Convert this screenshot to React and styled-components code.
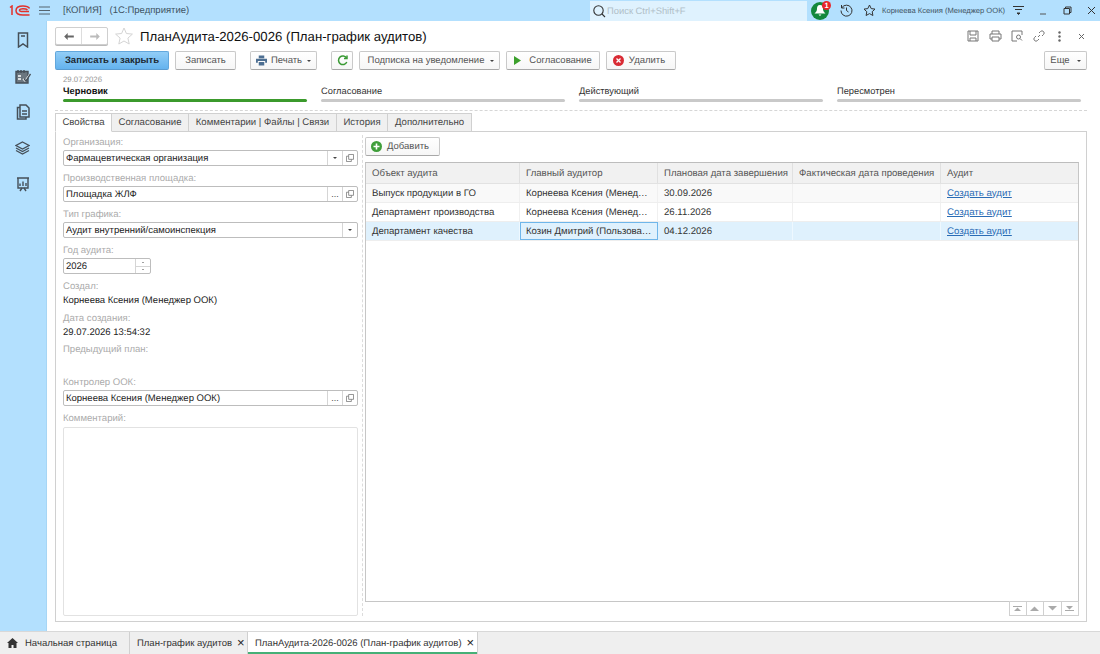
import React from "react";
import styled, { createGlobalStyle } from "styled-components";

const Global = createGlobalStyle`
html, body { margin: 0; padding: 0; height: 654px; overflow: hidden; background: #fff; }
#root { height: 654px; }
* { box-sizing: border-box; }
body { font-family: "Liberation Sans", Arial, sans-serif; font-size: 9.5px; color: #222; text-rendering: geometricPrecision; }
`;

const Page = styled.div`
  display: flex; flex-direction: column; width: 1100px; height: 654px; overflow: hidden;
`;
const TopBar = styled.div`
  display: flex; align-items: center; height: 21px; background: #b3e0fe; flex: none; position: relative;
`;
const Logo = styled.div`
  width: 30px; padding-left: 9px; flex: none; display: flex; align-items: center;
`;
const Burger = styled.div`
  width: 33px; padding-left: 9px; flex: none; display: flex; align-items: center;
`;
const AppName = styled.div`
  color: #3f5362; font-size: 9.5px; white-space: pre; width: 527px; flex: none; padding-left: 0;
`;
const Search = styled.div`
  width: 217px; height: 20px; background: #dff2fe; display: flex; align-items: center; gap: 1px;
  color: #b0bec7; font-size: 9.4px; padding-left: 2px; flex: none;
`;
const Bell = styled.div`
  position: relative; width: 18px; height: 18px; border-radius: 50%; background: #12883c; margin-left: 4px; flex: none;
  display: flex; align-items: center; justify-content: center;
`;
const BellBadge = styled.span`
  position: absolute; right: -2px; top: -1px; width: 9px; height: 9px; border-radius: 50%; background: #e8252b;
  color: #fff; font-size: 7.5px; font-weight: bold; line-height: 9px; text-align: center;
`;
const TopIcon = styled.div`
  width: ${(p) => p.$w || 23}px; flex: none; display: flex; justify-content: center; align-items: center;
`;
const UserName = styled.div`
  width: 126px; flex: none; color: #3f5362; font-size: 7.6px; white-space: nowrap; padding-left: 2px;
`;
const Middle = styled.div`
  flex: 1; display: flex; min-height: 0;
`;
const Sidebar = styled.div`
  width: 47px; flex: none; background: #b3e0fe; border-right: 1px solid #a7d6f5;
  display: grid; grid-auto-rows: 36px; align-content: start; padding: 1px 1px 0 0;
`;
const SideSlot = styled.div`
  display: flex; align-items: center; justify-content: center;
`;
const Main = styled.div`
  flex: 1; display: flex; flex-direction: column; min-width: 0; padding: 6px 13px 9px 8px;
`;
const TitleRow = styled.div`
  display: flex; align-items: center; height: 18px; flex: none;
`;
const NavGroup = styled.div`
  display: flex; width: 53px; height: 18px; border: 1px solid #cfcfcf; border-radius: 2px; background: #fff; flex: none;
  box-shadow: 0 1px 0 #bbb;
`;
const NavBtn = styled.div`
  flex: 1; display: flex; align-items: center; justify-content: center;
  & + & { border-left: 1px solid #ddd; }
`;
const Title = styled.div`
  font-size: 13.2px; color: #111; margin-left: 7px; white-space: nowrap; flex: 1;
`;
const TitleIcons = styled.div`
  display: flex; align-items: center; gap: 0; margin-right: -7px;
`;
const Toolbar = styled.div`
  display: flex; align-items: center; height: 19px; margin-top: 6px; flex: none;
`;
const Button = styled.div`
  height: 19px; width: ${(p) => p.$w}px; margin-left: ${(p) => p.$ml ?? 6}px; flex: none;
  display: flex; align-items: center; justify-content: center; gap: ${(p) => p.$gap ?? 5}px;
  padding: 0 ${(p) => p.$pr ?? 0}px 0 ${(p) => p.$pl ?? 0}px;
  border: 1px solid ${(p) => (p.$primary ? "#62a7dc" : "#c9c9c9")};
  border-bottom-color: ${(p) => (p.$primary ? "#5a9bd0" : "#a8a8a8")};
  border-radius: 2px;
  background: ${(p) => (p.$primary ? "linear-gradient(#92cdf7,#64b3ee)" : "linear-gradient(#fff,#f6f6f6)")};
  color: ${(p) => (p.$primary ? "#1c2a35" : "#555")};
  font-weight: ${(p) => (p.$primary ? "bold" : "normal")};
  font-size: 9.5px; white-space: nowrap;
`;
const Caret = styled.span`
  width: 0; height: 0; border-left: 2px solid transparent; border-right: 2px solid transparent;
  border-top: 2px solid #444; margin-left: ${(p) => p.$ml ?? 1}px;
`;
const Spring = styled.div`flex: 1;`;
const Steps = styled.div`
  display: flex; gap: 14px; padding: 0 0 0 8px; align-items: flex-end; height: 32px; flex: none;
`;
const Step = styled.div`
  width: 244px; flex: none; display: flex; flex-direction: column;
`;
const StepDate = styled.div`
  font-size: 7.8px; color: #999; line-height: 9px; height: 10px;
`;
const StepName = styled.div`
  font-size: 9.3px; line-height: 12px; color: ${(p) => (p.$on ? "#111" : "#333")}; font-weight: ${(p) => (p.$on ? "bold" : "normal")};
`;
const StepBar = styled.div`
  height: 3px; border-radius: 2px; margin-top: 2px; background: ${(p) => (p.$on ? "#3b9a2c" : "#c9c9c9")};
`;
const Dashed = styled.div`
  border-top: 1px dashed #d6d6d6; margin-top: 8px; flex: none;
`;
const Tabs = styled.div`
  display: flex; height: 19px; margin-top: 2px; flex: none; position: relative; z-index: 1; margin-bottom: -1px;
`;
const Tab = styled.div`
  height: 19px; width: ${(p) => p.$w}px; flex: none; display: flex; align-items: center; justify-content: center;
  border: 1px solid #d0d0d0; border-left-width: ${(p) => (p.$first ? 1 : 0)}px;
  border-bottom-color: ${(p) => (p.$on ? "#fff" : "#d0d0d0")};
  background: ${(p) => (p.$on ? "#fff" : "#f0f0f0")}; color: #444; font-size: 9.6px; white-space: nowrap;
`;
const Panel = styled.div`
  flex: 1; min-height: 0; display: flex; border: 1px solid #d0d0d0; padding: 0 7px 5px 7px;
`;
const FormCol = styled.div`
  width: 295px; flex: none; display: flex; flex-direction: column; padding-top: 4px; margin-right: 4px;
`;
const Label = styled.div`
  height: 14px; line-height: 14px; color: #ababab; font-size: 9.55px; flex: none;
`;
const Value = styled.div`
  height: ${(p) => p.$h || 13}px; line-height: 14px; font-size: 9.5px; color: #222; margin-bottom: ${(p) => p.$mb ?? 5}px; flex: none;
`;
const Field = styled.div`
  height: 16px; width: ${(p) => p.$w ? p.$w + "px" : "100%"}; flex: none; display: flex; margin-bottom: 6px;
  border: 1px solid #bdbdbd; border-radius: 2px; background: #fff;
`;
const FieldText = styled.div`
  flex: 1; padding-left: 2px; line-height: 15px; font-size: 9.5px; color: #222; white-space: nowrap;
`;
const FieldBtn = styled.div`
  width: 15px; flex: none; border-left: 1px solid #d5d5d5; display: flex; align-items: center; justify-content: center;
  color: #444; font-size: 9px;
`;
const Spin = styled.div`
  width: 15px; flex: none; border-left: 1px solid #d5d5d5; display: flex; flex-direction: column;
`;
const SpinPart = styled.div`
  flex: 1; display: flex; align-items: center; justify-content: center;
  & + & { border-top: 1px solid #d5d5d5; }
`;
const Comment = styled.div`
  flex: 1; border: 1px solid #e2e2e2; border-radius: 2px; margin-top: 1px; background: #fff;
`;
const TableCol = styled.div`
  flex: 1; min-width: 0; display: flex; flex-direction: column; border-left: 1px dashed #dcdcdc; padding: 5px 0 0 2px; margin-top: 3px; margin-bottom: 0;
`;
const AddRow = styled.div`
  display: flex; height: 19px; margin-top: -3px; flex: none;
`;
const Table = styled.div`
  flex: 1; min-height: 0; border: 1px solid #c6c6c6; border-top-color: #bdbdbd; margin-top: 6px; background: #fff;
`;
const Row = styled.div`
  display: grid; grid-template-columns: 154px 138px 135px 148px 1fr; height: ${(p) => (p.$head ? 21 : 19)}px;
  background: ${(p) => (p.$head ? "#f1f1f1" : p.$sel ? "#dff1fd" : p.$odd ? "#f9f9f9" : "#fff")};
  border-bottom: 1px solid ${(p) => (p.$head ? "#e2e2e2" : "#eee")};
`;
const Cell = styled.div`
  display: flex; align-items: center; padding-left: 6px; font-size: 9.6px; color: ${(p) => (p.$head ? "#555" : "#333")};
  border-right: 1px solid ${(p) => (p.$sel ? "#eef8ff" : p.$head ? "#e0e0e0" : "#f0f0f0")}; white-space: nowrap; overflow: hidden;
  &:last-child { border-right: 0; }
  ${(p) => p.$cur && "border: 1px solid #6fb6ea; padding-left: 5px;"}
`;
const LinkText = styled.a`
  color: #2a6cb5; text-decoration: underline; font-size: 9.7px;
`;
const Pager = styled.div`
  display: flex; justify-content: flex-end; flex: none; height: 15px; margin-top: -1px;
`;
const PagerBtn = styled.div`
  width: 17.5px; height: 15px; border: 1px solid #d0d0d0; border-left-width: ${(p) => (p.$first ? 1 : 0)}px;
  display: flex; align-items: center; justify-content: center; background: #fff;
`;
const BottomBar = styled.div`
  height: 23px; flex: none; background: #efefef; border-top: 1px solid #d8d8d8; display: flex;
`;
const BottomTab = styled.div`
  width: ${(p) => p.$w}px; flex: none; display: flex; align-items: center; gap: 5px; padding-left: ${(p) => p.$pl ?? 7}px;
  border-right: 1px solid #d0d0d0; font-size: 9.5px; color: #333; white-space: nowrap;
  background: ${(p) => (p.$on ? "#fff" : "transparent")};
  box-shadow: ${(p) => (p.$on ? "inset 0 -2px 0 #46b077" : "none")};
`;
const TabClose = styled.span`
  font-size: 13px; color: #222; line-height: 10px;
`;

const dark = "#454f58";

const Icon = ({ w = 14, h = 14, vb = "0 0 14 14", c = dark, sw = 1.2, children }) => (
  <svg width={w} height={h} viewBox={vb} fill="none" stroke={c} strokeWidth={sw}>{children}</svg>
);

const SideBookmark = () => (
  <Icon w={14} h={16} vb="0 0 14 16" sw={1.5}>
    <path d="M2.5 1h9v14l-4.5-3-4.5 3z" />
    <path d="M5 4h4" />
  </Icon>
);
const SideCalendar = () => (
  <Icon w={16} h={15} vb="0 0 16 15" sw={1.4}>
    <path d="M1 2.5h12v11.5H1z" fill="#6b767f" />
    <path d="M3 1v3M6 1v3M9 1v3" />
    <path d="M3 7h3M3 10h3M8 10l2 2 5-7" stroke="#fff" />
    <path d="M9 10l2 2 4.5-7" />
  </Icon>
);
const SideDocs = () => (
  <Icon w={14} h={16} vb="0 0 14 16" sw={1.5}>
    <path d="M4 1h6l3 3v9H4z" />
    <path d="M4 3.5H1.5V15H10v-2" />
    <path d="M6 7h5M6 10h5" />
  </Icon>
);
const SideLayers = () => (
  <Icon w={15} h={14} vb="0 0 15 14" sw={1.3}>
    <path d="M7.5 1L14 4.5 7.5 8 1 4.5z" />
    <path d="M1 7l6.5 3.5L14 7" />
    <path d="M1 9.5L7.5 13 14 9.5" />
  </Icon>
);
const SideBoard = () => (
  <Icon w={14} h={15} vb="0 0 14 15" sw={1.4}>
    <path d="M1 1h12M2 1v10h10V1" />
    <path d="M4 9V6.5M7 9V4.5M10 9V6" />
    <path d="M4 14l2-3M10 14l-2-3" />
  </Icon>
);

const CopyGlyph = () => (
  <Icon w={8} h={8} vb="0 0 9 9" c="#777" sw={0.9}>
    <path d="M3 .5h5.5V6H3z" />
    <path d="M3 2.5H.5v6H6V6" />
  </Icon>
);
const Tri = ({ up, c = "#444", s = 2 }) => (
  <span style={{
    width: 0, height: 0, borderLeft: `${s}px solid transparent`, borderRight: `${s}px solid transparent`,
    [up ? "borderBottom" : "borderTop"]: `${s}px solid ${c}`,
  }} />
);

const PagerIcon = ({ d }) => (
  <svg width="9" height="7" viewBox="0 0 9 7" fill="#aaa">
    <path d={d} />
  </svg>
);

const rows = [
  ["Выпуск продукции в ГО", "Корнеева Ксения (Менед…", "30.09.2026"],
  ["Департамент производства", "Корнеева Ксения (Менед…", "26.11.2026"],
  ["Департамент качества", "Козин Дмитрий (Пользова…", "04.12.2026"],
];

export default function App() {
  return (
    <Page>
      <Global />
      <TopBar>
        <Logo>
          <svg width="21" height="11" viewBox="0 0 21 11" fill="none" stroke="#e3312b" strokeWidth="1.5">
            <path d="M1 2.5L3 1v9" />
            <path d="M20.5 3.5C19.5 1.5 17 1 14 1 10 1 7 2.5 7 5.5S10 10 14 10h6.5" />
            <path d="M20 6.5h-6C12 6.5 10.5 6.2 10.5 5.2S12 3.8 14 3.8c2 0 3.5.2 4.5 1" />
          </svg>
        </Logo>
        <Burger>
          <svg width="11" height="9" viewBox="0 0 11 9" stroke="#55646f" strokeWidth="1"><path d="M0 1h11M0 4.5h11M0 8h11" /></svg>
        </Burger>
        <AppName>[КОПИЯ]   (1С:Предприятие)</AppName>
        <Search>
          <svg width="14" height="14" viewBox="0 0 14 14" fill="none" stroke="#333" strokeWidth="1.1">
            <circle cx="6.5" cy="6.5" r="4.7" /><path d="M10 10l3 3" />
          </svg>
          Поиск Ctrl+Shift+F
        </Search>
        <Bell>
          <svg width="12" height="11" viewBox="0 0 12 11" fill="#fff"><path d="M6 0c2.500 0 3 2 3 4s1 3 2.500 4.500H.5C2 7 3 6 3 4s.5-4 3-4zM4.500 9.500h3L6 11z" /></svg>
          <BellBadge>1</BellBadge>
        </Bell>
        <TopIcon $w={24} style={{ marginLeft: 5 }}>
          <svg width="13" height="13" viewBox="0 0 13 13" fill="none" stroke="#333" strokeWidth="1">
            <path d="M2 3.500A5.500 5.500 0 1 1 1 6.500" /><path d="M1.500 1v3h3" /><path d="M6.500 3.500v3l2 1.500" />
          </svg>
        </TopIcon>
        <TopIcon $w={22}>
          <svg width="13" height="13" viewBox="0 0 13 13" fill="none" stroke="#333" strokeWidth="1">
            <path d="M6.500 1l1.700 3.600 3.800.5-2.800 2.600.7 3.800-3.400-1.900-3.400 1.900.7-3.800L1 5.100l3.800-.5z" />
          </svg>
        </TopIcon>
        <UserName>Корнеева Ксения (Менеджер ООК)</UserName>
        <TopIcon $w={24}>
          <svg width="11" height="11" viewBox="0 0 11 11" stroke="#333" strokeWidth="1" fill="#333"><path d="M0 1.500h11M2 4.500h7" /><path d="M4 8h3l-1.500 1.500z" /></svg>
        </TopIcon>
        <TopIcon $w={25}>
          <svg width="8" height="8" viewBox="0 0 8 8" stroke="#555" strokeWidth="1"><path d="M1 7h6" /></svg>
        </TopIcon>
        <TopIcon $w={24}>
          <svg width="9" height="9" viewBox="0 0 9 9" fill="none" stroke="#333" strokeWidth="1"><path d="M1 2.500h5.500V8H1z" /><path d="M2.500 2.500V1H8v5.500H6.500" /></svg>
        </TopIcon>
        <TopIcon $w={24}>
          <svg width="9" height="9" viewBox="0 0 9 9" stroke="#333" strokeWidth="1"><path d="M1 1l7 7M8 1l-7 7" /></svg>
        </TopIcon>
      </TopBar>
      <Middle>
        <Sidebar>
          <SideSlot><SideBookmark /></SideSlot>
          <SideSlot><SideCalendar /></SideSlot>
          <SideSlot><SideDocs /></SideSlot>
          <SideSlot><SideLayers /></SideSlot>
          <SideSlot><SideBoard /></SideSlot>
        </Sidebar>
        <Main>
          <TitleRow>
            <NavGroup>
              <NavBtn>
                <svg width="10" height="7" viewBox="0 0 11 8" fill="#666"><path d="M0 4l4-4v2.800h7v2.400H4V8z" /></svg>
              </NavBtn>
              <NavBtn>
                <svg width="10" height="7" viewBox="0 0 11 8" fill="#bbb"><path d="M11 4L7 0v2.800H0v2.400h7V8z" /></svg>
              </NavBtn>
            </NavGroup>
            <svg width="18" height="18" viewBox="0 0 18 18" fill="none" stroke="#d4d4d4" strokeWidth="1" style={{ marginLeft: 7, flex: "none" }}>
              <path d="M9 1l2.400 5.500 6 .6-4.500 4 1.300 5.900L9 14l-5.200 3 1.300-5.900-4.500-4 6-.6z" />
            </svg>
            <Title>ПланАудита-2026-0026 (План-график аудитов)</Title>
            <TitleIcons>
              <TopIcon $w={22}>
                <svg width="12" height="12" viewBox="0 0 12 12" fill="none" stroke="#777" strokeWidth="1"><path d="M1 1h10v10H1z" /><path d="M3 1v4h6V1M3 11V8h6v3" /></svg>
              </TopIcon>
              <TopIcon $w={22}>
                <svg width="13" height="12" viewBox="0 0 13 12" fill="none" stroke="#777" strokeWidth="1"><path d="M3 4V1h7v3M3 9H1V4h11v5h-2" /><path d="M3 7h7v4H3z" /></svg>
              </TopIcon>
              <TopIcon $w={21}>
                <svg width="12" height="12" viewBox="0 0 12 12" fill="none" stroke="#777" strokeWidth="1"><path d="M11 5V1H1v10h5" /><circle cx="7.500" cy="7" r="2" /><path d="M9 8.500l2 2" /></svg>
              </TopIcon>
              <TopIcon $w={23}>
                <svg width="12" height="12" viewBox="0 0 12 12" fill="none" stroke="#777" strokeWidth="1"><path d="M5 7l2-2M6 3l1.500-1.500a2 2 0 0 1 3 3L9 6M6 9l-1.500 1.500a2 2 0 0 1-3-3L3 6" /></svg>
              </TopIcon>
              <TopIcon $w={18}>
                <svg width="3" height="11" viewBox="0 0 3 11" fill="#666"><circle cx="1.500" cy="1.500" r="1.200" /><circle cx="1.500" cy="5.500" r="1.200" /><circle cx="1.500" cy="9.500" r="1.200" /></svg>
              </TopIcon>
              <TopIcon $w={26}>
                <svg width="7" height="7" viewBox="0 0 7 7" stroke="#666" strokeWidth="1"><path d="M1 1l5 5M6 1L1 6" /></svg>
              </TopIcon>
            </TitleIcons>
          </TitleRow>
          <Toolbar>
            <Button $primary $w={114} $ml={0}>Записать и закрыть</Button>
            <Button $w={61}>Записать</Button>
            <Button $w={67} $ml={14} $gap={4}>
              <svg width="11" height="11" viewBox="0 0 12 11" fill="#4d6f92"><path d="M3 0h6v3H3zM0 3.500h12V8h-2V6H2v2H0zM3 7h6v4H3z" /></svg>
              Печать <Caret />
            </Button>
            <Button $w={22} $ml={14}>
              <svg width="11" height="11" viewBox="0 0 11 11" fill="none" stroke="#3a9a34" strokeWidth="1.500"><path d="M9.500 3A4.300 4.300 0 1 0 9.800 7" /><path d="M10 .5v3H7" /></svg>
            </Button>
            <Button $w={141} $pl={3}>Подписка на уведомление <Caret /></Button>
            <Button $w={94} $gap={8}>
              <svg width="7" height="9" viewBox="0 0 7 9" fill="#3ca02c"><path d="M0 0l7 4.500L0 9z" /></svg>
              Согласование
            </Button>
            <Button $w={70} $pr={4}>
              <svg width="11" height="11" viewBox="0 0 11 11"><circle cx="5.500" cy="5.500" r="5.500" fill="#d92b34" /><path d="M3.500 3.500l4 4M7.500 3.500l-4 4" stroke="#fff" strokeWidth="1.300" /></svg>
              Удалить
            </Button>
            <Spring />
            <Button $w={43}>Еще <Caret $ml={2} /></Button>
          </Toolbar>
          <Steps>
            <Step>
              <StepDate>29.07.2026</StepDate>
              <StepName $on>Черновик</StepName>
              <StepBar $on />
            </Step>
            <Step><StepName>Согласование</StepName><StepBar /></Step>
            <Step><StepName>Действующий</StepName><StepBar /></Step>
            <Step><StepName>Пересмотрен</StepName><StepBar /></Step>
          </Steps>
          <Dashed />
          <Tabs>
            <Tab $first $on $w={57}>Свойства</Tab>
            <Tab $w={77}>Согласование</Tab>
            <Tab $w={148}>Комментарии | Файлы | Связи</Tab>
            <Tab $w={51}>История</Tab>
            <Tab $w={84}>Дополнительно</Tab>
          </Tabs>
          <Panel>
            <FormCol>
              <Label>Организация:</Label>
              <Field>
                <FieldText>Фармацевтическая организация</FieldText>
                <FieldBtn><Tri /></FieldBtn>
                <FieldBtn><CopyGlyph /></FieldBtn>
              </Field>
              <Label>Производственная площадка:</Label>
              <Field>
                <FieldText>Площадка ЖЛФ</FieldText>
                <FieldBtn>...</FieldBtn>
                <FieldBtn><CopyGlyph /></FieldBtn>
              </Field>
              <Label>Тип графика:</Label>
              <Field>
                <FieldText>Аудит внутренний/самоинспекция</FieldText>
                <FieldBtn><Tri /></FieldBtn>
              </Field>
              <Label>Год аудита:</Label>
              <Field $w={88}>
                <FieldText>2026</FieldText>
                <Spin>
                  <SpinPart><Tri up s={1.500} /></SpinPart>
                  <SpinPart><Tri s={1.500} /></SpinPart>
                </Spin>
              </Field>
              <Label>Создал:</Label>
              <Value>Корнеева Ксения (Менеджер ООК)</Value>
              <Label>Дата создания:</Label>
              <Value $h={12}>29.07.2026 13:54:32</Value>
              <Label>Предыдущий план:</Label>
              <Value $h={19} $mb={0} />
              <Label>Контролер ООК:</Label>
              <Field>
                <FieldText>Корнеева Ксения (Менеджер ООК)</FieldText>
                <FieldBtn>...</FieldBtn>
                <FieldBtn><CopyGlyph /></FieldBtn>
              </Field>
              <Label>Комментарий:</Label>
              <Comment />
            </FormCol>
            <TableCol>
              <AddRow>
                <Button $w={75} $ml={0} $pr={5}>
                  <svg width="11" height="11" viewBox="0 0 11 11"><circle cx="5.500" cy="5.500" r="5.500" fill="#3f9e3a" /><path d="M5.500 2.500v6M2.500 5.500h6" stroke="#fff" strokeWidth="1.600" /></svg>
                  Добавить
                </Button>
              </AddRow>
              <Table>
                <Row $head>
                  {["Объект аудита", "Главный аудитор", "Плановая дата завершения", "Фактическая дата проведения", "Аудит"].map((h) => (
                    <Cell $head key={h}>{h}</Cell>
                  ))}
                </Row>
                {rows.map((r, i) => (
                  <Row key={r[0]} $odd={i === 0} $sel={i === 2}>
                    <Cell $sel={i === 2}>{r[0]}</Cell>
                    <Cell $sel={i === 2} $cur={i === 2}>{r[1]}</Cell>
                    <Cell $sel={i === 2}>{r[2]}</Cell>
                    <Cell $sel={i === 2} />
                    <Cell><LinkText href="#">Создать аудит</LinkText></Cell>
                  </Row>
                ))}
              </Table>
              <Pager>
                <PagerBtn $first><PagerIcon d="M0 1h9v1H0zM4.500 2.500L8 6H1z" /></PagerBtn>
                <PagerBtn><PagerIcon d="M4.500 1.500L9 6H0z" /></PagerBtn>
                <PagerBtn><PagerIcon d="M4.500 5.500L9 1H0z" /></PagerBtn>
                <PagerBtn><PagerIcon d="M0 5h9v1H0zM4.500 4.500L8 1H1z" /></PagerBtn>
              </Pager>
            </TableCol>
          </Panel>
        </Main>
      </Middle>
      <BottomBar>
        <BottomTab $w={130}>
          <svg width="11" height="10" viewBox="0 0 11 10" fill="#333"><path d="M5.500 0L11 5H9.500v5H6.500V7h-2v3h-3V5H0z" /></svg>
          <span style={{ marginLeft: 2 }}>Начальная страница</span>
        </BottomTab>
        <BottomTab $w={118}>
          План-график аудитов <TabClose>×</TabClose>
        </BottomTab>
        <BottomTab $on $w={230}>
          ПланАудита-2026-0026 (План-график аудитов) <TabClose>×</TabClose>
        </BottomTab>
      </BottomBar>
    </Page>
  );
}
